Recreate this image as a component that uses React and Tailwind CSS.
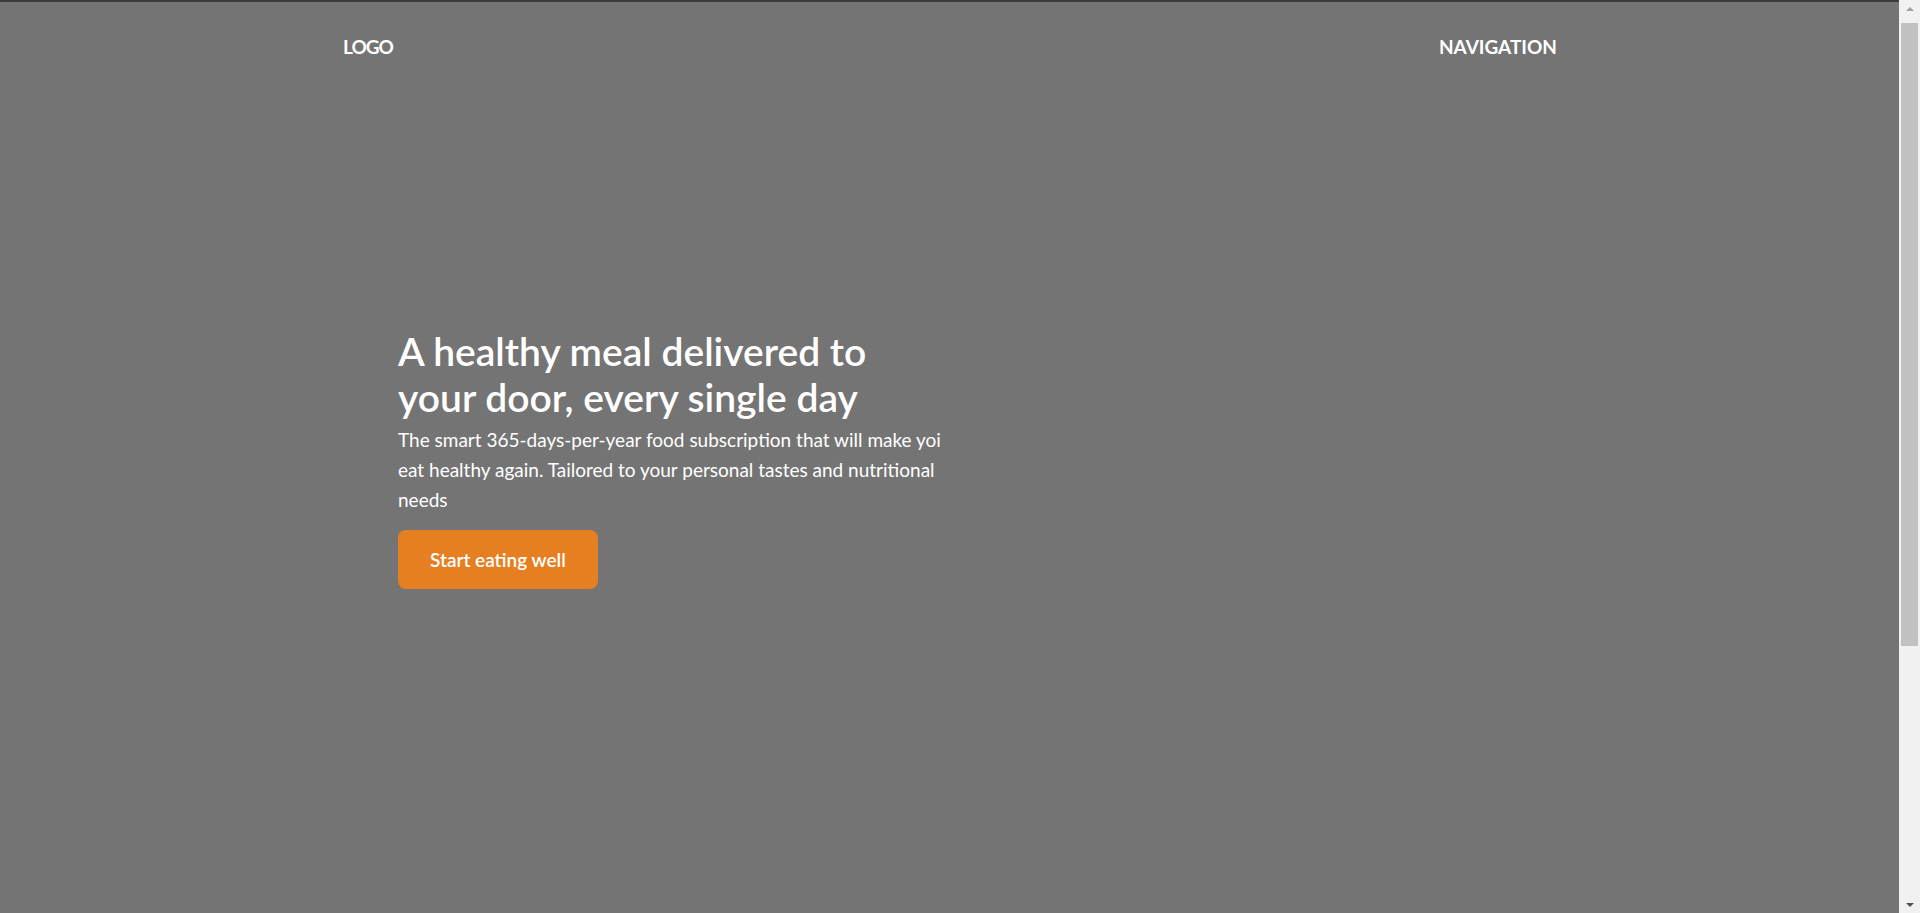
import React from 'react';

const font = { fontFamily: 'Lato, "Open Sans", sans-serif' };

function Header() {
  return (
    <header className="flex items-center justify-between pl-[343px] pr-[342px] pt-[33px]">
      <a href="#" className="text-[19px] font-bold text-white leading-[24px] tracking-[-1px]">LOGO</a>
      <nav className="text-[19px] font-bold text-white leading-[24px]">NAVIGATION</nav>
    </header>
  );
}

function Hero() {
  return (
    <section className="pl-[398px] pt-[269px]">
      <h1 className="text-[39px] font-semibold text-white leading-[46px] w-[500px]">
        A healthy meal delivered to your door, every single day
      </h1>
      <p className="text-[19px] text-white leading-[30px] w-[558px] mt-[5px]">
        The smart 365-days-per-year food subscription that will make yoi eat healthy again. Tailored to your personal tastes and nutritional needs
      </p>
      <a
        href="#"
        className="inline-block mt-[15px] bg-[#e67e22] text-white text-[19px] font-semibold rounded-lg px-[32px] py-[15px] leading-[29px]"
      >
        Start eating well
      </a>
    </section>
  );
}

// window scrollbar strip on the right edge
function Scrollbar() {
  return (
    <aside className="w-[21px] bg-[#f1f1f1] flex flex-col items-center">
      <div className="h-[17px] flex items-center justify-center">
        <div className="w-0 h-0 border-x-[4px] border-x-transparent border-b-[4px] border-b-[#a3a3a3]" />
      </div>
      <div className="w-[17px] h-[623px] mt-[6px] bg-[#c1c1c1]" />
      <div className="flex-1" />
      <div className="h-[17px] flex items-center justify-center">
        <div className="w-0 h-0 border-x-[4px] border-x-transparent border-t-[4px] border-t-[#505050]" />
      </div>
    </aside>
  );
}

export default function App() {
  return (
    <div className="flex h-[913px] overflow-hidden" style={font}>
      <main className="flex-1 min-h-[1290px] bg-[#747474] border-t-2 border-[#3c3c3c]">
        <Header />
        <Hero />
      </main>
      <Scrollbar />
    </div>
  );
}
